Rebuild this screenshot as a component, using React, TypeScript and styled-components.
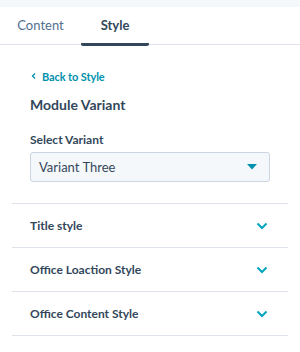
import React from 'react';
import styled, { createGlobalStyle } from 'styled-components';

const GlobalStyle = createGlobalStyle`
  html, body {
    margin: 0;
    padding: 0;
    background: #ffffff;
  }
  body {
    font-family: 'Lato', 'Noto Sans', sans-serif;
    color: #33475b;
  }
`;

const sections = ['Title style', 'Office Loaction Style', 'Office Content Style'];

const App: React.FC = () => {
  return (
    <>
      <GlobalStyle />
      <Panel>
        <TopStrip />
        <Tabs>
          <Tab width={81}>Content</Tab>
          <Tab width={68} active>
            Style
          </Tab>
        </Tabs>
        <Body>
          <BackLink>
            <svg width="8" height="8" viewBox="0 0 8 8">
              <path d="M5 1.5 L2.5 4 L5 6.5" fill="none" stroke="currentColor" strokeWidth="1.3" />
            </svg>
            Back to Style
          </BackLink>
          <Heading>Module Variant</Heading>
          <Label>Select Variant</Label>
          <SelectBox>
            <span>Variant Three</span>
            <svg width="10" height="6" viewBox="0 0 10 6">
              <path d="M0 0 L10 0 L5 5.5 Z" fill="#0091ae" />
            </svg>
          </SelectBox>
        </Body>
        <SectionList>
          {sections.map((name) => (
            <SectionRow key={name}>
              <span>{name}</span>
              <svg width="12" height="8" viewBox="0 0 12 8">
                <path d="M1.5 1.5 L6 6 L10.5 1.5" fill="none" stroke="#00a4bd" strokeWidth="2" />
              </svg>
            </SectionRow>
          ))}
        </SectionList>
      </Panel>
    </>
  );
};

const Panel = styled.div`
  width: 300px;
  height: 352px;
  background: #ffffff;
`;

const TopStrip = styled.div`
  height: 7px;
  background: #f5f8fa;
`;

const Tabs = styled.div`
  display: flex;
  height: 37px;
  border-bottom: 1px solid #dfe3eb;
`;

const Tab = styled.div<{ active?: boolean; width: number }>`
  width: ${({ width }) => width}px;
  display: flex;
  align-items: center;
  justify-content: center;
  font-size: 13px;
  font-weight: ${({ active }) => (active ? 700 : 400)};
  color: ${({ active }) => (active ? '#33475b' : '#516f90')};
  border-bottom: 3px solid ${({ active }) => (active ? '#33475b' : 'transparent')};
  border-radius: 0 0 2px 2px;
  margin-bottom: -2px;
  padding-bottom: 1px;
`;

const Body = styled.div`
  padding: 24px 30px 21px;
`;

const BackLink = styled.div`
  display: flex;
  align-items: center;
  gap: 4px;
  font-size: 11px;
  font-weight: 700;
  color: #0091ae;
  height: 14px;
  letter-spacing: -0.1px;
`;

const Heading = styled.div`
  margin-top: 13px;
  font-size: 14px;
  font-weight: 700;
  color: #33475b;
`;

const Label = styled.div`
  margin-top: 19px;
  font-size: 12px;
  font-weight: 700;
  color: #33475b;
`;

const SelectBox = styled.div`
  margin-top: 5px;
  height: 28px;
  border: 1px solid #cbd6e2;
  border-radius: 3px;
  background: #f5f8fa;
  display: flex;
  align-items: center;
  justify-content: space-between;
  padding: 0 12px 0 8px;
  font-size: 13px;
  color: #33475b;
`;

const SectionList = styled.div`
  margin: 0 12px;
  border-top: 1px solid #dfe3eb;
`;

const SectionRow = styled.div`
  height: 43px;
  border-bottom: 1px solid #dfe3eb;
  display: flex;
  align-items: center;
  justify-content: space-between;
  padding: 0 20px 0 18px;
  font-size: 12px;
  font-weight: 700;
  color: #33475b;
`;

export default App;
